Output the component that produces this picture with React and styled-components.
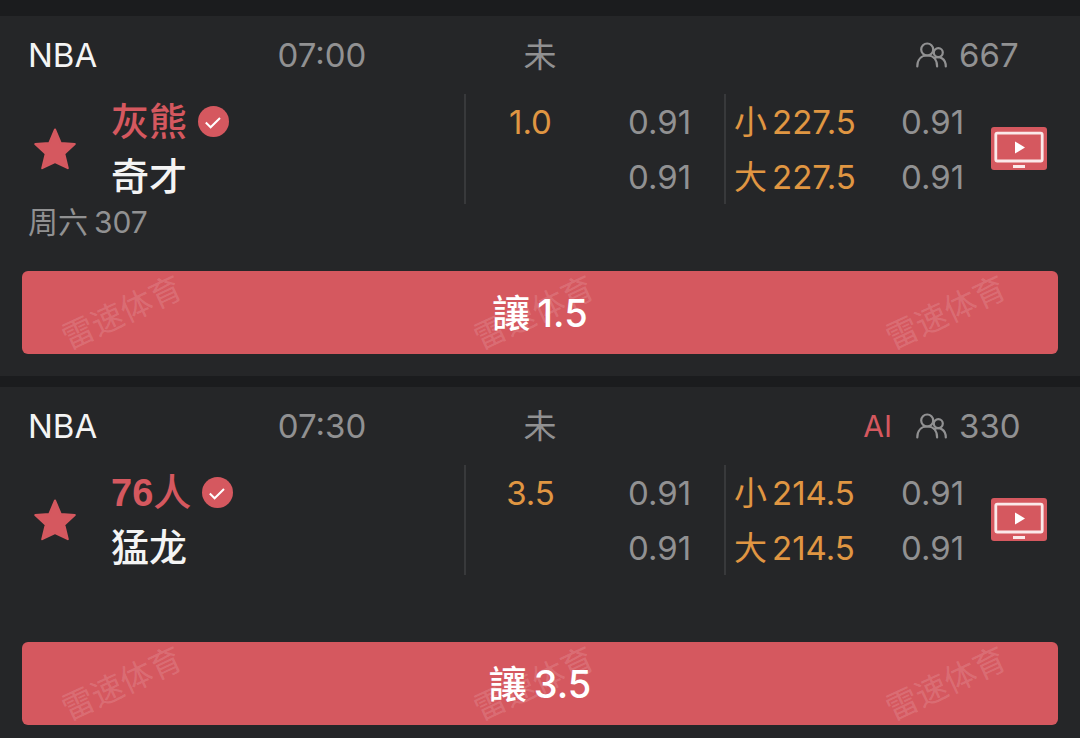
import React from 'react'
import styled, { createGlobalStyle } from 'styled-components'

const GlobalStyle = createGlobalStyle`
  * {
    box-sizing: border-box;
  }
  body {
    margin: 0;
    background: #1b1c1e;
    color: #f4f4f4;
    font-family: Inter, 'Noto Sans CJK SC', sans-serif;
    font-size: 33px;
    line-height: 40px;
  }
  button {
    margin: 0;
    padding: 0;
    border: 0;
    background: none;
    color: inherit;
    font: inherit;
    cursor: pointer;
  }
  svg {
    display: block;
  }
`

const List = styled.main`
  display: flex;
  flex-direction: column;
  gap: 11px;
  padding-top: 16px;
`

const Card = styled.article`
  background: #252628;
  padding-bottom: 22px;

  &:last-child {
    padding-bottom: 13px;
  }
`

const Header = styled.header`
  display: grid;
  grid-template-columns: 213fr 218fr 218fr 431fr;
  align-items: center;
  height: 78px;
`

const League = styled.span`
  padding-left: 28px;
`

const HeaderText = styled.span`
  color: #919192;
  text-align: center;
`

const Viewers = styled.div`
  display: flex;
  align-items: center;
  justify-content: flex-end;
  gap: 12px;
  padding-right: 57px;
  color: #919192;
`

const AiTag = styled.span`
  margin-right: 12px;
  color: #d5585f;
  font-size: 30px;
`

const ViewerCount = styled.span`
  min-width: 64px;
`

const Body = styled.div`
  display: grid;
  grid-template-columns: 110px 354fr 260fr 261fr 68px;
  height: 110px;
  padding-right: 27px;
`

const IconButton = styled.button`
  display: flex;
  align-items: center;
  justify-content: center;
`

const Teams = styled.div`
  display: grid;
  grid-template-rows: 1fr 1fr;
  align-items: center;
  padding-left: 1px;
`

const Team = styled.div`
  display: flex;
  align-items: center;
  gap: 11px;
  color: ${(props) => (props.$picked ? '#d5585f' : '#f4f4f4')};
  font-family: 'Liberation Sans', 'Noto Sans CJK SC', sans-serif;
  font-size: 38px;
  font-weight: 500;
`

const Odds = styled.div`
  display: grid;
  grid-template-columns: ${(props) => (props.$wide ? '155fr 105fr' : '1fr 1fr')};
  grid-template-rows: 1fr 1fr;
  align-items: center;
  border-left: 2px solid #38393b;
`

const Line = styled.span`
  color: #e09642;
  text-align: center;
`

const Total = styled.span`
  display: flex;
  gap: 5px;
  padding-left: 8px;
  color: #e09642;
`

const Price = styled.span`
  color: #919192;
  text-align: center;
`

const Footer = styled.div`
  display: flex;
  gap: 6px;
  height: 67px;
  padding: 0 28px;
  color: #919192;
  font-size: 30px;
  line-height: 36px;
`

const PickButton = styled.button`
  position: relative;
  display: flex;
  align-items: center;
  justify-content: center;
  gap: 7px;
  width: calc(100% - 44px);
  height: 83px;
  margin: 0 22px;
  border-radius: 6px;
  background: #d5585f;
  color: #fff;
  font-size: 38px;
  font-weight: 500;
`

const Watermarks = styled.span`
  position: absolute;
  inset: 0;
  display: flex;
  align-items: center;
  justify-content: space-between;
  padding: 0 48px 0 36px;
  color: rgba(255, 255, 255, 0.15);
  font-size: 32px;
  font-weight: 400;
  line-height: 32px;
  pointer-events: none;
`

const Watermark = styled.span`
  transform: rotate(-25deg);
`

const StarIcon = () => (
  <svg width="42" height="42" viewBox="0 0 42 42" aria-hidden="true">
    <path
      d="M21 1.5l5.700 13.400 14.100 1.200-10.500 9.600 3.500 14.500L21 34 8.200 40.200l3.500-14.500L1.200 16.100l14.100-1.200z"
      fill="#d5585f"
      stroke="#d5585f"
      strokeWidth="2"
      strokeLinejoin="round"
    />
  </svg>
)

const CheckIcon = () => (
  <svg width="31" height="31" viewBox="0 0 31 31" aria-hidden="true">
    <circle cx="15.5" cy="15.5" r="15.5" fill="#d5585f" />
    <path d="M7.800 16.500l4.800 4.800 9.400-9.300" fill="none" stroke="#fff" strokeWidth="2" />
  </svg>
)

const PeopleIcon = () => (
  <svg
    width="31"
    height="26"
    viewBox="0 0 31 26"
    fill="none"
    stroke="currentColor"
    strokeWidth="2.2"
    strokeLinecap="round"
    aria-hidden="true"
  >
    <circle cx="11.200" cy="7.500" r="6" />
    <path d="M1.300 24.500c0-7 4-11 9.900-11s9.900 4 9.900 11" />
    <circle cx="22.300" cy="10.600" r="4.500" />
    <path d="M18.500 16c5.500-2.500 11.300 1 11.300 8.500" />
  </svg>
)

const TvIcon = () => (
  <svg width="56" height="44" viewBox="0 0 56 44" aria-hidden="true">
    <rect width="56" height="43" rx="3" fill="#d5585f" />
    <rect x="4.800" y="6.200" width="46.400" height="27.800" rx="1.500" fill="none" stroke="#fbe9ea" strokeWidth="2.800" />
    <path d="M24 14.500v12l10-6z" fill="#fff" />
    <rect x="22" y="38" width="12" height="3" fill="#fbe9ea" />
  </svg>
)

const matches = [
  {
    id: 1,
    time: '07:00',
    viewers: 667,
    ai: false,
    home: '灰熊',
    away: '奇才',
    spread: '1.0',
    total: '227.5',
    day: '周六',
    code: '307',
    handicap: '1.5',
  },
  {
    id: 2,
    time: '07:30',
    viewers: 330,
    ai: true,
    home: (
      <>
        <b>76</b>人
      </>
    ),
    away: '猛龙',
    spread: '3.5',
    total: '214.5',
    handicap: '3.5',
  },
]

const Match = (props) => {
  return (
    <Card>
      <Header>
        <League>NBA</League>
        <HeaderText>{props.time}</HeaderText>
        <HeaderText>未</HeaderText>
        <Viewers>
          {props.ai && <AiTag>AI</AiTag>}
          <PeopleIcon />
          <ViewerCount>{props.viewers}</ViewerCount>
        </Viewers>
      </Header>
      <Body>
        <IconButton type="button" aria-label="收藏">
          <StarIcon />
        </IconButton>
        <Teams>
          <Team $picked>
            <span>{props.home}</span>
            <CheckIcon />
          </Team>
          <Team>{props.away}</Team>
        </Teams>
        <Odds>
          <Line>{props.spread}</Line>
          <Price>0.91</Price>
          <Line />
          <Price>0.91</Price>
        </Odds>
        <Odds $wide>
          <Total>
            <span>小</span>
            <span>{props.total}</span>
          </Total>
          <Price>0.91</Price>
          <Total>
            <span>大</span>
            <span>{props.total}</span>
          </Total>
          <Price>0.91</Price>
        </Odds>
        <IconButton type="button" aria-label="直播">
          <TvIcon />
        </IconButton>
      </Body>
      <Footer>
        <span>{props.day}</span>
        <span>{props.code}</span>
      </Footer>
      <PickButton type="button">
        <span>讓</span>
        <span>{props.handicap}</span>
        <Watermarks aria-hidden="true">
          <Watermark>雷速体育</Watermark>
          <Watermark>雷速体育</Watermark>
          <Watermark>雷速体育</Watermark>
        </Watermarks>
      </PickButton>
    </Card>
  )
}

const App = () => {
  return (
    <>
      <GlobalStyle />
      <List>
        {matches.map((match) => (
          <Match key={match.id} {...match} />
        ))}
      </List>
    </>
  )
}

export default App
